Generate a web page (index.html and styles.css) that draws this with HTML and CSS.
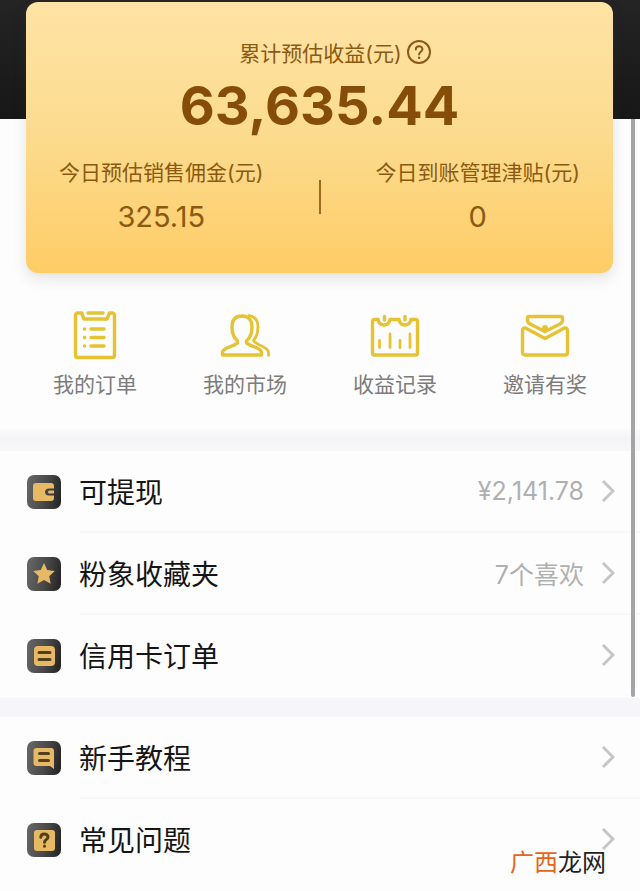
FILE: index.html
```html
<!DOCTYPE html>
<html lang="zh-CN">
<head>
  <meta charset="UTF-8" />
  <meta name="viewport" content="width=device-width, initial-scale=1.0" />
  <title>我的收益</title>
  <link rel="stylesheet" href="styles.css">
</head>
<body>
  <main class="page">
    <div class="scroll-area">
      <section class="hero">
        <div class="card">
          <div class="card-title">
            <span>累计预估收益(元)</span>
            <button class="help" type="button" aria-label="说明">
              <svg width="26" height="26" viewBox="0 0 26 26" fill="none" stroke="currentColor" stroke-width="2" stroke-linecap="round">
                <circle cx="13" cy="13" r="11" />
                <path d="M9.8 10.4c0-4.3 6.6-4.2 6.6-.2 0 2.5-3.3 2.6-3.3 5.2" />
                <path d="M13.1 18.6v.2" stroke-width="2.4" />
              </svg>
            </button>
          </div>
          <div class="total">63,635.44</div>
          <div class="split">
            <div class="split-item">
              <div class="split-label">今日预估销售佣金(元)</div>
              <div class="split-value">325.15</div>
            </div>
            <div class="split-item">
              <div class="split-label">今日到账管理津贴(元)</div>
              <div class="split-value">0</div>
            </div>
          </div>
        </div>
      </section>

      <nav class="quick">
        <a href="#">
          <svg width="52" height="52" viewBox="0 0 52 52" fill="none" stroke="currentColor" stroke-width="3.4" stroke-linejoin="round" stroke-linecap="round">
            <path d="M13 4H9Q6.500 4 6.500 6.500V46Q6.500 48.500 9 48.500H43Q45.500 48.500 45.500 46V6.500Q45.500 4 43 4H40.500L38 10H15L12.500 4" />
            <path d="M19 4H34M22 20H35M22 28.500H35M22 37H35M15.500 20h.2M15.500 28.500h.2M15.500 37h.2" />
          </svg>
          <span>我的订单</span>
        </a>
        <a href="#">
          <svg width="52" height="52" viewBox="0 0 52 52" fill="none" stroke="currentColor" stroke-width="3.4" stroke-linejoin="round">
            <path d="M23 7C16 7 13 11.500 13 18C13 24 15 29 18.500 32V34C14 38 5 38 3.500 43V46H42.500V43C41 38 32 38 27.500 34V32C31 29 33 24 33 18C33 11.500 30 7 23 7Z" />
            <path d="M29 6.500C36 7 39 11.500 39 18C39 24 37.500 28 34.500 31.500C38 37 48.500 37 49.500 43V47.500" stroke-width="2.8" />
          </svg>
          <span>我的市场</span>
        </a>
        <a href="#">
          <svg width="52" height="52" viewBox="0 0 52 52" fill="none" stroke="currentColor" stroke-width="3.4" stroke-linejoin="round" stroke-linecap="round">
            <path d="M9 10.500H5.500Q3.500 10.500 3.500 12.500V44Q3.500 46 5.500 46H46.500Q48.500 46 48.500 44V12.500Q48.500 10.500 46.500 10.500H42" />
            <path d="M9 10.500Q10 16 15 16T21 10.500H30Q31 16 36 16T42 10.500M15.500 7.500V11M36 7.500V11" />
            <path d="M10.500 31.500V38.500M21 25V38.500M31 31.500V38.500M41 25V38.500" stroke-width="2.8" />
          </svg>
          <span>收益记录</span>
        </a>
        <a href="#">
          <svg width="52" height="52" viewBox="0 0 52 52" fill="none" stroke="currentColor" stroke-width="3.4" stroke-linejoin="round">
            <path d="M8.500 12V9Q8.500 7.500 10.500 7.500H41.500Q43.500 7.500 43.500 9V12Q43.500 13.500 40 15.500L26 22.500L12 15.500Q8.500 13.500 8.500 12Z" />
            <path d="M6.500 19L26 29.500L45.500 19Q48.500 18.500 48.500 22V43.500Q48.500 46 46 46H6Q3.500 46 3.500 43.500V22Q3.500 18.500 6.500 19Z" />
            <circle cx="26" cy="19" r="3" fill="currentColor" stroke="none" />
          </svg>
          <span>邀请有奖</span>
        </a>
      </nav>

      <section class="list">
        <a class="row" href="#">
          <svg class="badge" viewBox="0 0 34 34">
            <path class="gold" d="M9 8h15q3 0 3 3v2.500h-5q-4 0-4 3.500t4 3.500h5v2.500q0 3-3 3H9q-3 0-3-3V11q0-3 3-3z" />
            <path class="gold" d="M22.500 15.500H27v3h-4.500q-1.500 0-1.500-1.500t1.500-1.500z" />
          </svg>
          <span class="row-main">
            <span class="name">可提现</span>
            <span class="value">¥2,141.78</span>
            <svg class="arrow" viewBox="0 0 14 24"><path d="M2 2l10 10L2 22" /></svg>
          </span>
        </a>
        <a class="row" href="#">
          <svg class="badge" viewBox="0 0 34 34">
            <path class="gold" d="M17 6l3.200 7.100 7.600.9-5.600 5.200 1.500 7.600L17 23l-6.700 3.800 1.500-7.600L6.200 14l7.600-.9z" />
          </svg>
          <span class="row-main">
            <span class="name">粉象收藏夹</span>
            <span class="value">7个喜欢</span>
            <svg class="arrow" viewBox="0 0 14 24"><path d="M2 2l10 10L2 22" /></svg>
          </span>
        </a>
        <a class="row" href="#">
          <svg class="badge" viewBox="0 0 34 34">
            <rect class="gold" x="7" y="7" width="21" height="20" rx="4" />
            <path class="ink" d="M12 13.500h11M12 20.500h11" />
          </svg>
          <span class="row-main">
            <span class="name">信用卡订单</span>
            <svg class="arrow" viewBox="0 0 14 24"><path d="M2 2l10 10L2 22" /></svg>
          </span>
        </a>
      </section>
      <div class="scrollbar"></div>
    </div>

    <section class="list">
      <a class="row" href="#">
        <svg class="badge" viewBox="0 0 34 34">
          <path class="gold" d="M9.500 7h14.500q3 0 3 3v18l-4-3H9.500q-3 0-3-3V10q0-3 3-3z" />
          <path class="ink" d="M12.500 12.500h9M12.500 19.500h9" />
        </svg>
        <span class="row-main">
          <span class="name">新手教程</span>
          <svg class="arrow" viewBox="0 0 14 24"><path d="M2 2l10 10L2 22" /></svg>
        </span>
      </a>
      <a class="row" href="#">
        <svg class="badge" viewBox="0 0 34 34">
          <rect class="gold" x="7" y="7" width="21" height="21" rx="3" />
          <path class="ink" d="M13.800 14.300c0-4.500 7.200-4.200 7.200-.3 0 2.600-3.500 2.600-3.500 5.300M17.500 23v.3" />
        </svg>
        <span class="row-main">
          <span class="name">常见问题</span>
          <svg class="arrow" viewBox="0 0 14 24"><path d="M2 2l10 10L2 22" /></svg>
        </span>
      </a>
    </section>

    <div class="watermark"><span>广西</span>龙网</div>
  </main>
</body>
</html>
```

FILE: styles.css
```css
* {
  box-sizing: border-box;
}
body {
  margin: 0;
  background-color: #fdfdfd;
  color: #151515;
  font-family: Inter, "Noto Sans CJK SC", sans-serif;
}
a {
  color: inherit;
  text-decoration: none;
}
.page,
.scroll-area {
  position: relative;
}
.page {
  min-height: 100vh;
}
.hero {
  padding: 2px 27px 0 26px;
  background: linear-gradient(#242424, #171717) no-repeat 0 0 / 100% 119px;
}
.card {
  padding: 36px 0;
  border-radius: 12px;
  background: linear-gradient(#ffe3a5, #fbdb8e 50%, #ffcc66);
  box-shadow: 0 6px 14px rgba(90, 70, 90, 0.14);
  color: #8a5a12;
  text-align: center;
}
.card-title {
  display: flex;
  justify-content: center;
  align-items: center;
  gap: 4px;
  padding-left: 32px;
  height: 28px;
  font-size: 21px;
}
.help {
  display: flex;
  padding: 0;
  border: none;
  background: none;
  color: inherit;
  cursor: pointer;
}
.total {
  color: #854d08;
  font-size: 54px;
  font-weight: 700;
  line-height: 80px;
}
.split {
  display: grid;
  grid-template-columns: 1fr 1fr;
  gap: 46px;
  position: relative;
  padding-top: 12px;
}
.split::after {
  content: "";
  position: absolute;
  left: calc(50% - 1px);
  top: 34px;
  width: 2px;
  height: 34px;
  background-color: #9a6a20;
}
.split-label {
  font-size: 21px;
  line-height: 30px;
  white-space: nowrap;
}
.split-value {
  padding-top: 9px;
  font-size: 29px;
  line-height: 40px;
}
.quick {
  display: grid;
  grid-template-columns: repeat(4, 1fr);
  padding: 36px 20px 28px;
}
.quick a {
  display: flex;
  flex-direction: column;
  align-items: center;
  gap: 8px;
  color: #7c7c7c;
  font-size: 21px;
  line-height: 32px;
}
.quick svg {
  color: #e6c235;
}
.list {
  padding-left: 27px;
}
.list::before {
  content: "";
  display: block;
  height: 20px;
  margin-left: -27px;
  background: linear-gradient(#f9f9f9, #f5f5fa 30%);
}
.quick + .list::before {
  height: 22px;
  background: linear-gradient(#fafafa, #f5f5f7 40%, #f7f7f7);
}
.row {
  display: flex;
  align-items: center;
  gap: 18px;
}
.badge {
  width: 34px;
  height: 34px;
  border-radius: 7px;
  background: linear-gradient(100deg, #686868, #484848 55%, #202020);
}
.gold {
  fill: #e8b964;
}
.ink {
  fill: none;
  stroke: #51401f;
  stroke-width: 3;
  stroke-linecap: round;
}
.row-main {
  flex: 1;
  display: flex;
  align-items: center;
  height: 82px;
  padding-right: 25px;
  border-bottom: 2px solid #f8f8f8;
}
.row:last-child .row-main {
  border-bottom-color: transparent;
}
.name {
  flex: 1;
  font-size: 28px;
}
.value {
  margin-right: 17px;
  color: #b0b0b0;
  font-size: 25px;
}
.arrow {
  width: 14px;
  height: 24px;
  fill: none;
  stroke: #c6c6c6;
  stroke-width: 3;
}
.scrollbar {
  position: absolute;
  top: 119px;
  right: 5px;
  bottom: 0;
  width: 4px;
  border-radius: 0 0 2px 2px;
  background-color: #a4a4a6;
}
.watermark {
  position: absolute;
  right: 34px;
  bottom: 12px;
  color: #222;
  font-size: 24px;
  line-height: 32px;
}
.watermark span {
  color: #e8641b;
}
```
